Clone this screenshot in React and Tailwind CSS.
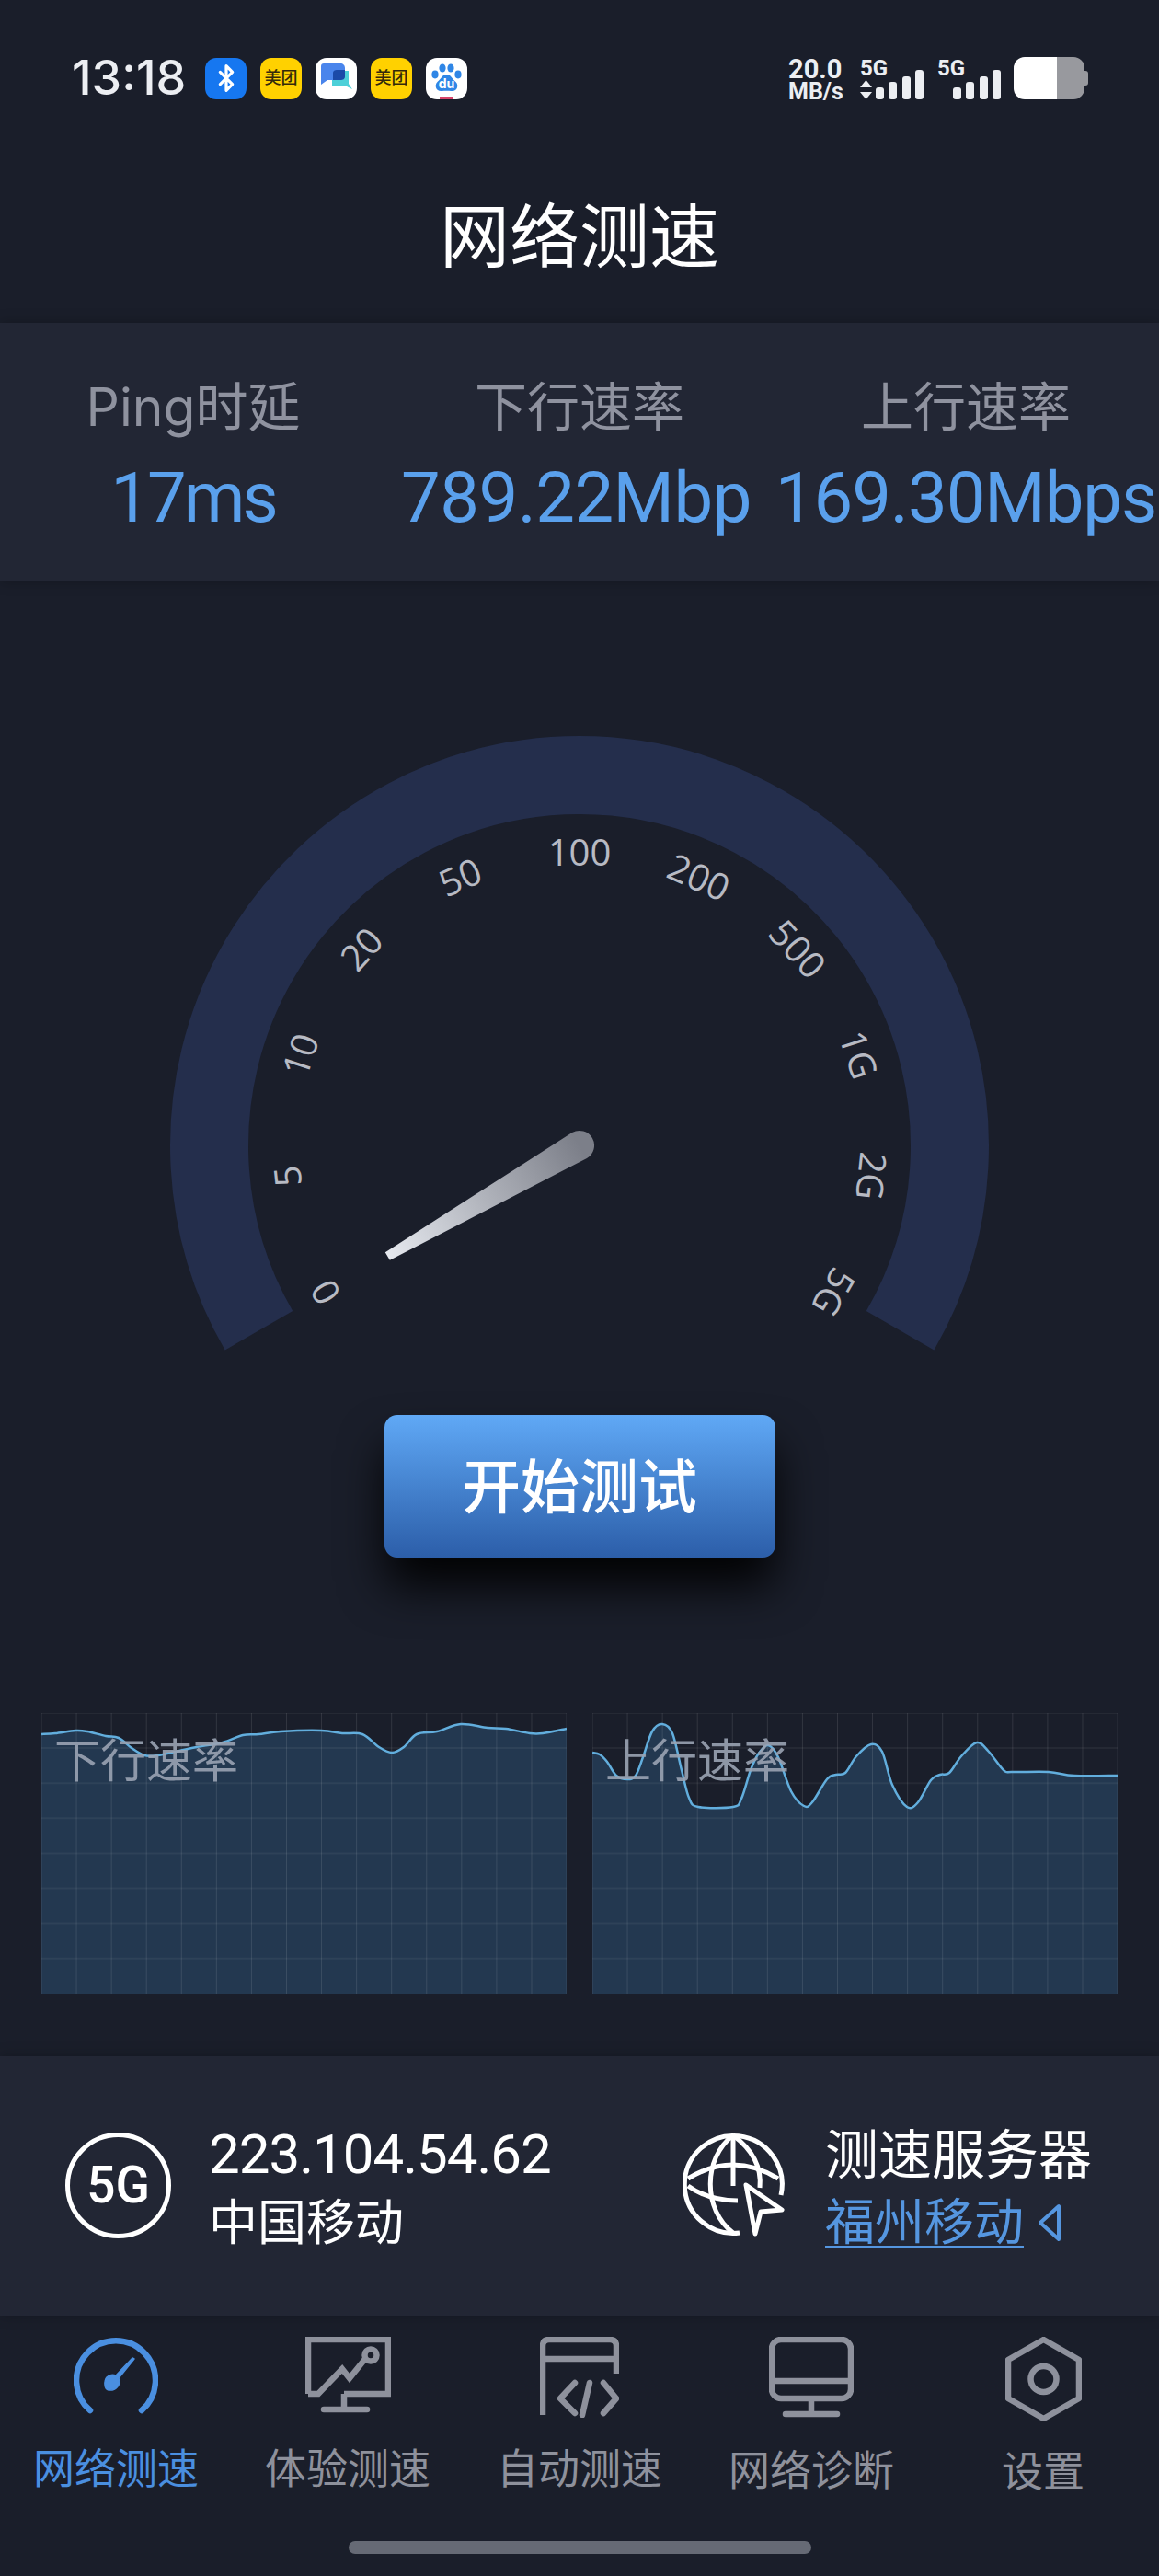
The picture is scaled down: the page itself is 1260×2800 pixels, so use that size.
import React from 'react';
import { Bluetooth } from 'lucide-react';

const GAUGE_LABELS = ['0', '5', '10', '20', '50', '100', '200', '500', '1G', '2G', '5G'];

const DOWN_POINTS = [[0,23],[15,22],[37,19],[50,20],[70,25],[84,27],[98,38],[112,46],[126,46],[150,41],[169,37],[197,32],[219,24],[236,23],[260,20],[304,19],[327,22],[349,23],[367,37],[381,43],[394,37],[408,23],[430,20],[456,12],[485,16],[505,17],[531,22],[545,22],[571,17]];
const UP_POINTS = [[0,43],[8,45],[16,53],[26,68],[38,72],[47,68],[55,48],[65,20],[76,12],[87,22],[97,62],[105,92],[115,102],[153,102],[162,93],[172,62],[180,45],[191,35],[202,48],[216,85],[230,101],[239,97],[255,72],[265,67],[275,65],[287,47],[303,34],[315,42],[326,78],[342,102],[354,97],[368,73],[378,67],[388,65],[401,47],[418,32],[431,42],[447,62],[457,64],[496,64],[524,68],[571,68]];

// catmull-rom through the sampled points
const smoothPath = (pts) => {
  let d = `M${pts[0][0]} ${pts[0][1]}`;
  for (let i = 0; i < pts.length - 1; i++) {
    const p0 = pts[i - 1] || pts[i];
    const p1 = pts[i];
    const p2 = pts[i + 1];
    const p3 = pts[i + 2] || p2;
    const c1x = p1[0] + (p2[0] - p0[0]) / 6;
    const c1y = p1[1] + (p2[1] - p0[1]) / 6;
    const c2x = p2[0] - (p3[0] - p1[0]) / 6;
    const c2y = p2[1] - (p3[1] - p1[1]) / 6;
    d += ` C${c1x} ${c1y} ${c2x} ${c2y} ${p2[0]} ${p2[1]}`;
  }
  return d;
};

const Signal = ({ arrows }) => (
  <div className="relative w-[69px] h-[46px] flex items-end justify-end gap-[5.5px]">
    <span className="absolute left-0 top-0 font-['Roboto',sans-serif] text-[24px] leading-[24px] font-bold text-[#eceef2]">5G</span>
    {arrows && (
      <svg className="absolute left-0 bottom-0" width="13" height="21" viewBox="0 0 13 21" fill="#eceef2">
        <path d="M6.5 0L13 8H0Z" />
        <path d="M6.5 21L0 13H13Z" />
      </svg>
    )}
    <div className="w-[9px] h-[13px] rounded-[3px] bg-[#eceef2]" />
    <div className="w-[9px] h-[19px] rounded-[3px] bg-[#eceef2]" />
    <div className="w-[9px] h-[25px] rounded-[3px] bg-[#eceef2]" />
    <div className="w-[9px] h-[32px] rounded-[3px] bg-[#eceef2]" />
  </div>
);

const Meituan = () => (
  <div className="w-[45px] h-[45px] rounded-[12px] bg-[#ffd100] flex items-center justify-center text-[18px] leading-none font-medium text-[#33290a] whitespace-nowrap">
    美团
  </div>
);

const StatusBar = () => (
  <div className="flex justify-between items-start pl-[78px] pr-[77px] pt-[62px] h-[108px]">
    <div className="flex items-center">
      <span className="w-[145px] text-[52px] leading-[46px] font-medium text-[#eceef2]">13:18</span>
      <div className="flex gap-[15px]">
        <div className="w-[45px] h-[45px] rounded-[12px] bg-[#1677f0] flex items-center justify-center">
          <Bluetooth className="w-[32px] h-[32px] text-white" strokeWidth={2.4} />
        </div>
        <Meituan />
        <div className="w-[45px] h-[45px] rounded-[12px] bg-white flex items-center justify-center">
          <svg width="36" height="36" viewBox="0 0 36 36">
            <path d="M14 12h18v14l4 6-6-3H14Z" transform="translate(-1 -2)" fill="#4dd0d8" />
            <path d="M4 2h18c3 0 5 2 5 5v6c0 4-3 7-7 7H8l-7 5V5c0-2 1-3 3-3Z" fill="#4a85ec" />
            <path d="M14 12c0-2 2-3 4-3h9v7c0 3-2 4-5 4h-8Z" fill="#1b4aa8" />
          </svg>
        </div>
        <Meituan />
        <div className="relative w-[45px] h-[45px] rounded-[12px] bg-white overflow-hidden">
          <svg className="absolute left-[5px] top-[6px]" width="35" height="33" viewBox="0 0 35 33" fill="#2f86e6">
            <ellipse cx="5" cy="12" rx="3.6" ry="4.4" />
            <ellipse cx="13" cy="5" rx="3.6" ry="4.6" />
            <ellipse cx="22" cy="5" rx="3.6" ry="4.6" />
            <ellipse cx="30" cy="12" rx="3.6" ry="4.4" />
            <path d="M17.5 12c5 0 6 5 10 8 4 4 1 11-5 10-3-.5-7-.5-10 0-6 1-9-6-5-10 4-3 5-8 10-8Z" />
          </svg>
          <span className="absolute left-0 right-0 top-[20px] text-center text-[14px] leading-[16px] font-bold text-white">du</span>
          <div className="absolute left-[15px] bottom-0 w-[15px] h-[3px] bg-[#d8446a]" />
        </div>
      </div>
    </div>
    <div className="flex items-start">
      <div className="w-[78px] flex flex-col font-['Roboto',sans-serif] font-bold text-[#eceef2]">
        <span className="text-[29px] leading-[26px]">20.0</span>
        <span className="text-[25px] leading-[24px]">MB/s</span>
      </div>
      <Signal arrows />
      <div className="w-[15px]" />
      <Signal />
      <div className="ml-[14px] flex items-center">
        <div className="w-[77px] h-[46px] rounded-[12px] overflow-hidden flex">
          <div className="w-[47px] bg-white" />
          <div className="flex-1 bg-[#98999e]" />
        </div>
        <div className="w-[4px] h-[16px] rounded-r-[3px] bg-[#98999e]" />
      </div>
    </div>
  </div>
);

const Stat = ({ label, value, valueClass }) => (
  <div className="flex flex-col items-center min-w-0">
    <div className="text-[57px] leading-[64px] text-[#8f929f] whitespace-nowrap">{label}</div>
    <div className={`mt-[21px] font-['Roboto',sans-serif] text-[76px] leading-[90px] text-[#5aa0ec] whitespace-nowrap overflow-hidden ${valueClass}`}>{value}</div>
  </div>
);

const Gauge = () => (
  <svg width="1260" height="850" viewBox="0 0 1260 850" className="block">
    <defs>
      <linearGradient id="needleFill" gradientUnits="userSpaceOnUse" x1="421" y1="733" x2="630" y2="613">
        <stop offset="0" stopColor="#e6e9ef" />
        <stop offset="1" stopColor="#7c7f89" />
      </linearGradient>
    </defs>
    <path d="M281.4 814.25A402.5 402.5 0 1 1 978.6 814.25" fill="none" stroke="#242e4c" strokeWidth="85" />
    {GAUGE_LABELS.map((label, i) => {
      const deg = -120 + 24 * i;
      const rad = (deg * Math.PI) / 180;
      const x = 630 + 320 * Math.sin(rad);
      const y = 613 - 320 * Math.cos(rad);
      return (
        <text
          key={label}
          x={x}
          y={y}
          transform={`rotate(${deg} ${x} ${y})`}
          textAnchor="middle"
          dominantBaseline="central"
          fill="#b7bac3"
          fontSize="40"
          fontFamily="'Open Sans', sans-serif"
        >
          {label}
        </text>
      );
    })}
    <path d="M418.8 729.2L622 599.1A16 16 0 0 1 638 626.9L423.8 737.8Z" fill="url(#needleFill)" />
  </svg>
);

const Chart = ({ label, points }) => {
  const line = smoothPath(points);
  return (
    <div className="relative h-[305px]">
      <svg width="571" height="305" viewBox="0 0 571 305" className="block">
        <path d={`${line} L571 305 L0 305Z`} fill="#233850" />
        {Array.from({ length: 16 }, (_, i) => (
          <line key={i} x1={i * 38.07} x2={i * 38.07} y1="0" y2="305" stroke="#ffffff" strokeOpacity="0.11" strokeWidth="1" />
        ))}
        {Array.from({ length: 8 }, (_, i) => (
          <line key={i} x1="0" x2="571" y1={i * 38.1} y2={i * 38.1} stroke="#ffffff" strokeOpacity="0.05" strokeWidth="2" />
        ))}
        <path d={line} fill="none" stroke="#62aedd" strokeWidth="2.5" />
      </svg>
      <span className="absolute left-[14px] top-[24px] text-[50px] leading-[56px] text-[#9aa3b3]/90">{label}</span>
    </div>
  );
};

const GlobeIcon = () => (
  <svg width="112" height="114" viewBox="0 0 112 114" fill="none" stroke="#ffffff" strokeWidth="5">
    <path d="M107 68A53 53 0 1 0 62 109" />
    <path d="M55 3C22 28 22 84 55 109" />
    <path d="M55 3C78 20 86 40 84 60" />
    <path d="M55 3V58" />
    <path d="M6 50Q55 20 104 50" />
    <path d="M6 58Q28 74 60 74" />
    <path d="M69 57L108 84L85 86L79 110Z" strokeLinejoin="round" />
  </svg>
);

const InfoPanel = () => (
  <div className="h-[282px] bg-[#222634] shadow-[0_0_14px_rgba(0,0,0,0.25)] flex pt-[70px] text-white">
    <div className="ml-[71px] mt-[13px] w-[115px] h-[115px] rounded-full border-[5px] border-white flex items-center justify-center font-['Roboto',sans-serif] text-[55px] font-medium leading-none">
      5G
    </div>
    <div className="ml-[41px] w-[515px]">
      <div className="font-['Roboto',sans-serif] text-[60px] leading-[74px] tracking-[-1px]">223.104.54.62</div>
      <div className="text-[53px] leading-[74px]">中国移动</div>
    </div>
    <div className="mt-[13px]">
      <GlobeIcon />
    </div>
    <div className="ml-[43px]">
      <div className="text-[58px] leading-[74px]">测速服务器</div>
      <div className="flex items-center leading-[74px] text-[#5596e0]">
        <span className="text-[54px] underline underline-offset-[6px] decoration-[3px]">福州移动</span>
        <svg className="ml-[15px]" width="26" height="42" viewBox="0 0 26 42" fill="none" stroke="currentColor" strokeWidth="4">
          <path d="M23 3V39L3 21Z" strokeLinejoin="round" />
        </svg>
      </div>
    </div>
  </div>
);

const navStroke = { fill: 'none', stroke: 'currentColor', strokeWidth: 6.5, strokeLinecap: 'round', strokeLinejoin: 'round' };

const SpeedIcon = () => (
  <svg width="92" height="84" viewBox="0 0 92 84" {...navStroke}>
    <path d="M18 80A43 43 0 1 1 74 80" />
    <path d="M66 24L49 45C52 52 46 59 38 58C33 57 33 48 36 44C39 41 43 41 46 42L64 23Z" fill="currentColor" stroke="currentColor" strokeWidth="1.5" />
  </svg>
);

const ChartScreenIcon = () => (
  <svg width="93" height="84" viewBox="0 0 93 84" {...navStroke} strokeLinecap="butt" strokeLinejoin="miter">
    <path d="M3 62V3H90V62H42" />
    <path d="M3 62H14L40 35L48 45L65 24" />
    <circle cx="71" cy="20" r="6.5" />
    <path d="M42 62V78" />
    <path d="M20 79H67" strokeLinecap="round" />
  </svg>
);

const CodeIcon = () => (
  <svg width="86" height="88" viewBox="0 0 86 88" {...navStroke}>
    <path d="M3 85V10Q3 3 10 3H76Q83 3 83 10V40" strokeLinecap="butt" />
    <path d="M3 24H83" />
    <path d="M38 50L22 67L38 83" />
    <path d="M54 50L46 85" />
    <path d="M69 50L83 67L69 83" />
  </svg>
);

const MonitorIcon = () => (
  <svg width="92" height="88" viewBox="0 0 92 88" {...navStroke}>
    <rect x="3" y="3" width="86" height="64" rx="10" />
    <path d="M3 48H89" />
    <path d="M46 67V82" strokeLinecap="butt" />
    <path d="M18 84H74" />
  </svg>
);

const HexIcon = () => (
  <svg width="83" height="92" viewBox="0 0 83 92" {...navStroke}>
    <path d="M41.5 3L80 25V67L41.5 89L3 67V25Z" />
    <circle cx="41.5" cy="46" r="14" />
  </svg>
);

const NAV_ITEMS = [
  { label: '网络测速', Icon: SpeedIcon, active: true },
  { label: '体验测速', Icon: ChartScreenIcon },
  { label: '自动测速', Icon: CodeIcon },
  { label: '网络诊断', Icon: MonitorIcon, labelClass: 'mt-[2px]' },
  { label: '设置', Icon: HexIcon, labelClass: 'mt-[3px]' },
];

const BottomNav = () => (
  <div className="flex-1 pt-[23px]">
    <div className="grid grid-cols-5 h-[222px]">
      {NAV_ITEMS.map(({ label, Icon, active, labelClass }) => (
        <div key={label} className={`flex flex-col items-center ${active ? 'text-[#4a8fe0]' : 'text-[#8e919c]'}`}>
          <div className="h-[116px]">
            <Icon />
          </div>
          <div className={`text-[45px] leading-[56px] ${labelClass || ''}`}>{label}</div>
        </div>
      ))}
    </div>
    <div className="mx-auto w-[503px] h-[14px] rounded-full bg-[#666a75]" />
  </div>
);

export default function App() {
  return (
    <div className="w-[1260px] h-[2800px] bg-[#1a1e2a] flex flex-col overflow-hidden font-['Inter','Noto_Sans_CJK_SC',sans-serif]">
      <div className="h-[351px]">
        <StatusBar />
        <h1 className="mt-[109px] text-center text-[76px] leading-[80px] font-normal text-white">网络测速</h1>
      </div>

      <div className="h-[281px] bg-[#222634] shadow-[0_0_14px_rgba(0,0,0,0.25)] grid grid-cols-3 pt-[60px]">
        <Stat label="Ping时延" value="17ms" valueClass="tracking-[-3px]" />
        <Stat label="下行速率" value="789.22Mbps" valueClass="tracking-[-0.5px] w-[384px] mr-[4px]" />
        <Stat label="上行速率" value="169.30Mbps" valueClass="tracking-[-1px]" />
      </div>

      <Gauge />

      <div className="mt-[56px] flex justify-center">
        <button className="w-[425px] h-[155px] rounded-[14px] bg-gradient-to-b from-[#60a9f6] to-[#2c5ea9] text-white text-[64px] font-medium shadow-[0_32px_50px_-2px_rgba(0,0,0,0.95)]">
          开始测试
        </button>
      </div>

      <div className="mt-[169px] px-[45px] grid grid-cols-2 gap-[28px]">
        <Chart label="下行速率" points={DOWN_POINTS} />
        <Chart label="上行速率" points={UP_POINTS} />
      </div>

      <div className="mt-[68px]">
        <InfoPanel />
      </div>

      <BottomNav />
    </div>
  );
}
